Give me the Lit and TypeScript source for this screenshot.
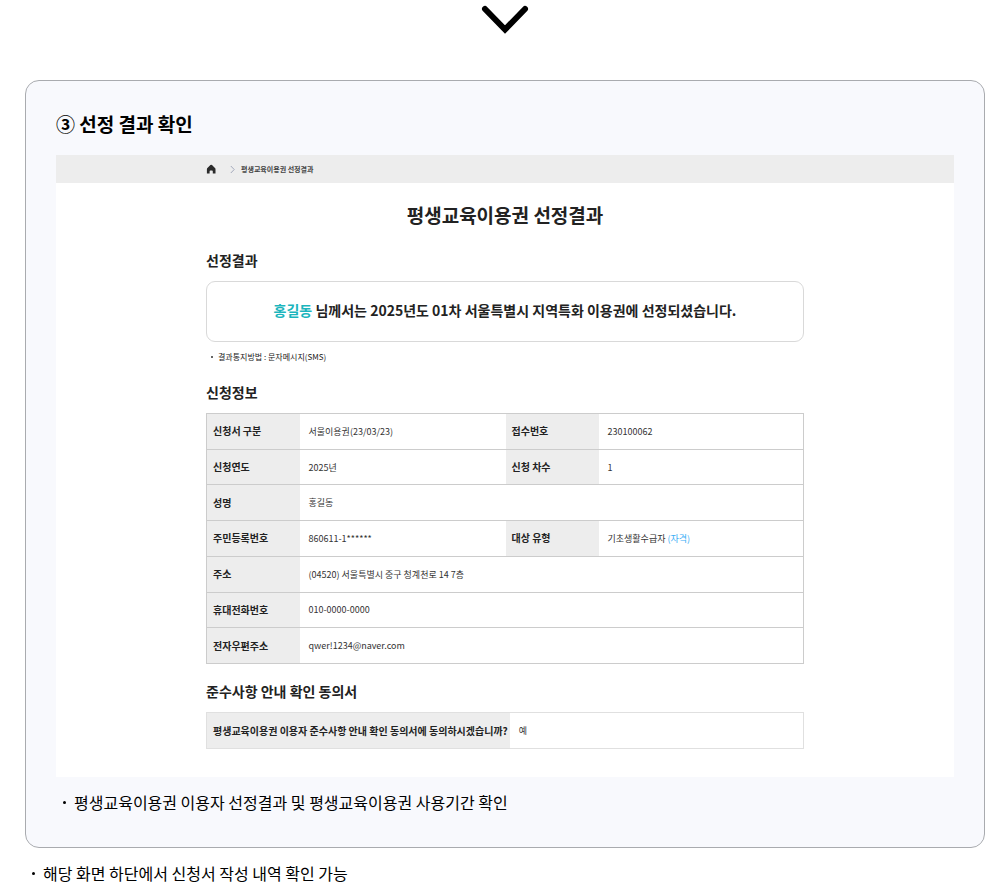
import { LitElement, html, css, nothing } from "lit";
import { customElement } from "lit/decorators.js";

interface Field {
  label: string;
  value: string;
  link?: string;
}

const ROWS: Field[][] = [
  [
    { label: "신청서 구분", value: "서울이용권(23/03/23)" },
    { label: "접수번호", value: "230100062" },
  ],
  [
    { label: "신청연도", value: "2025년" },
    { label: "신청 차수", value: "1" },
  ],
  [{ label: "성명", value: "홍길동" }],
  [
    { label: "주민등록번호", value: "860611-1******" },
    { label: "대상 유형", value: "기초생활수급자", link: "(자격)" },
  ],
  [{ label: "주소", value: "(04520) 서울특별시 중구 청계천로 14 7층" }],
  [{ label: "휴대전화번호", value: "010-0000-0000" }],
  [{ label: "전자우편주소", value: "qwer!1234@naver.com" }],
];

@customElement("result-view")
export class ResultView extends LitElement {
  static styles = css`
    :host {
      display: block;
      background: #fff;
      color: #222;
      padding-bottom: 28px;
    }
    .crumbs {
      background: #ededed;
    }
    .wrap {
      max-width: 598px;
      margin: 0 auto;
    }
    .trail {
      display: flex;
      align-items: center;
      height: 28px;
      font-size: 7px;
      font-weight: 700;
      color: #444;
    }
    .home {
      display: flex;
      margin-right: 13px;
    }
    .sep {
      margin-right: 6px;
    }
    .title {
      margin: 18px 0 0;
      font-size: 19px;
      line-height: 28px;
      text-align: center;
    }
    .heading {
      margin: 0;
      font-size: 14px;
      line-height: 20px;
    }
    .result {
      margin-top: 21px;
    }
    .message {
      display: flex;
      justify-content: center;
      align-items: center;
      box-sizing: border-box;
      min-height: 61px;
      margin: 11px 0 0;
      padding: 0 16px 3px;
      border: 1px solid #d9d9d9;
      border-radius: 9px;
      font-size: 14px;
      font-weight: 700;
      line-height: 20px;
    }
    .name {
      color: #1cb5bd;
    }
    .notes {
      list-style: none;
      margin: 9px 0 0;
      padding: 0 0 0 5px;
      font-size: 8px;
      line-height: 12px;
    }
    .note {
      display: flex;
      align-items: center;
      gap: 5px;
    }
    .note::before {
      content: "";
      width: 2px;
      height: 2px;
      border-radius: 50%;
      background: #333;
    }
    .info {
      margin-top: 19px;
    }
    .agree {
      margin-top: 17px;
    }
    .table {
      width: 100%;
      margin-top: 11px;
      border-collapse: collapse;
      border: 1px solid #ccc;
      font-size: 9px;
      line-height: 14px;
    }
    .fields {
      table-layout: fixed;
      height: 251px;
    }
    .col-label {
      width: 93px;
    }
    .col-value {
      width: 206px;
    }
    .label {
      padding: 0 6px;
      background: #ededed;
      border-block: 1px solid #ccc;
      font-size: 10px;
      font-weight: 700;
      text-align: left;
      white-space: nowrap;
    }
    .value {
      padding: 1px 9px 0;
      border-block: 1px solid #ccc;
      color: #333;
    }
    .link {
      color: #3aaef5;
      text-decoration: none;
    }
    .consent,
    .consent .label,
    .consent .value {
      border-color: #e0e0e0;
    }
    .consent {
      height: 37px;
    }
    .consent .label {
      width: 1px;
      padding-right: 2px;
    }
  `;

  private cells(field: Field, wide: boolean) {
    return html`<th class="label" scope="row">${field.label}</th>
      <td class="value" colspan=${wide ? 3 : 1}>
        ${field.value}
        ${field.link ? html`<a class="link" href="#">${field.link}</a>` : nothing}
      </td>`;
  }

  render() {
    return html`
      <nav class="crumbs" aria-label="현재 위치">
        <div class="wrap trail">
          <a class="home" href="#" aria-label="홈">
            <svg width="11" height="11" viewBox="0 0 11 11">
              <path
                d="M5.2 .8 Q5.6 .8 6 1.1 L9 4 Q9.5 4.5 9.5 5.2 V9.6 H6.8 V7.4 Q6.8 6.5 6 6.5 H4.4 Q3.6 6.5 3.6 7.4 V9.6 H.9 V5.2 Q.9 4.5 1.4 4 L4.4 1.1 Q4.8 .8 5.2 .8 Z"
                fill="#2b2b2b"
              />
            </svg>
          </a>
          <svg class="sep" width="5" height="9" viewBox="0 0 5 9">
            <path d="M.8 1 L4.2 4.5 L.8 8" fill="none" stroke="#a3a8bb" />
          </svg>
          <span>평생교육이용권 선정결과</span>
        </div>
      </nav>
      <div class="wrap">
        <h2 class="title">평생교육이용권 선정결과</h2>
        <section class="result">
          <h3 class="heading">선정결과</h3>
          <p class="message">
            <span
              ><span class="name">홍길동</span> 님께서는 2025년도 01차 서울특별시
              지역특화 이용권에 선정되셨습니다.</span
            >
          </p>
          <ul class="notes">
            <li class="note">결과통지방법 : 문자메시지(SMS)</li>
          </ul>
        </section>
        <section class="info">
          <h3 class="heading">신청정보</h3>
          <table class="table fields">
            <colgroup>
              <col class="col-label" />
              <col class="col-value" />
              <col class="col-label" />
              <col />
            </colgroup>
            <tbody>
              ${ROWS.map(
                (row) =>
                  html`<tr>
                    ${row.map((field) => this.cells(field, row.length === 1))}
                  </tr>`
              )}
            </tbody>
          </table>
        </section>
        <section class="agree">
          <h3 class="heading">준수사항 안내 확인 동의서</h3>
          <table class="table consent">
            <tbody>
              <tr>
                <th class="label" scope="row">
                  평생교육이용권 이용자 준수사항 안내 확인 동의서에 동의하시겠습니까?
                </th>
                <td class="value">예</td>
              </tr>
            </tbody>
          </table>
        </section>
      </div>
    `;
  }
}

@customElement("app-root")
export class AppRoot extends LitElement {
  static styles = css`
    :host {
      display: block;
      padding: 0 23px 0 25px;
      background: #fff;
      color: #000;
      font-family: "Noto Sans CJK KR", "Noto Sans", sans-serif;
    }
    .arrow {
      display: block;
      margin: 0 auto;
      padding: 4px 0 46px;
    }
    .panel {
      padding: 28px 30px 33px;
      border: 1px solid #a9abaf;
      border-radius: 14px;
      background: #f8f9fd;
    }
    .step {
      margin: 0 0 16px;
      font-size: 19px;
      line-height: 30px;
    }
    .bullets {
      list-style: none;
      margin: 13px 0 0;
      padding: 0 0 0 7px;
      font-size: 16px;
      line-height: 24px;
    }
    .bullet {
      display: flex;
      align-items: center;
      gap: 8px;
    }
    .bullet::before {
      content: "";
      width: 3px;
      height: 3px;
      border-radius: 50%;
      background: #000;
    }
  `;

  render() {
    return html`
      <svg class="arrow" width="50" height="30" viewBox="0 0 50 30" aria-hidden="true">
        <path
          d="M5 5 L25 25.5 L45 5"
          fill="none"
          stroke="#000"
          stroke-width="6"
          stroke-linecap="round"
        />
      </svg>
      <section class="panel">
        <h1 class="step">③ 선정 결과 확인</h1>
        <result-view></result-view>
        <ul class="bullets">
          <li class="bullet">
            평생교육이용권 이용자 선정결과 및 평생교육이용권 사용기간 확인
          </li>
        </ul>
      </section>
      <ul class="bullets">
        <li class="bullet">해당 화면 하단에서 신청서 작성 내역 확인 가능</li>
      </ul>
    `;
  }
}
